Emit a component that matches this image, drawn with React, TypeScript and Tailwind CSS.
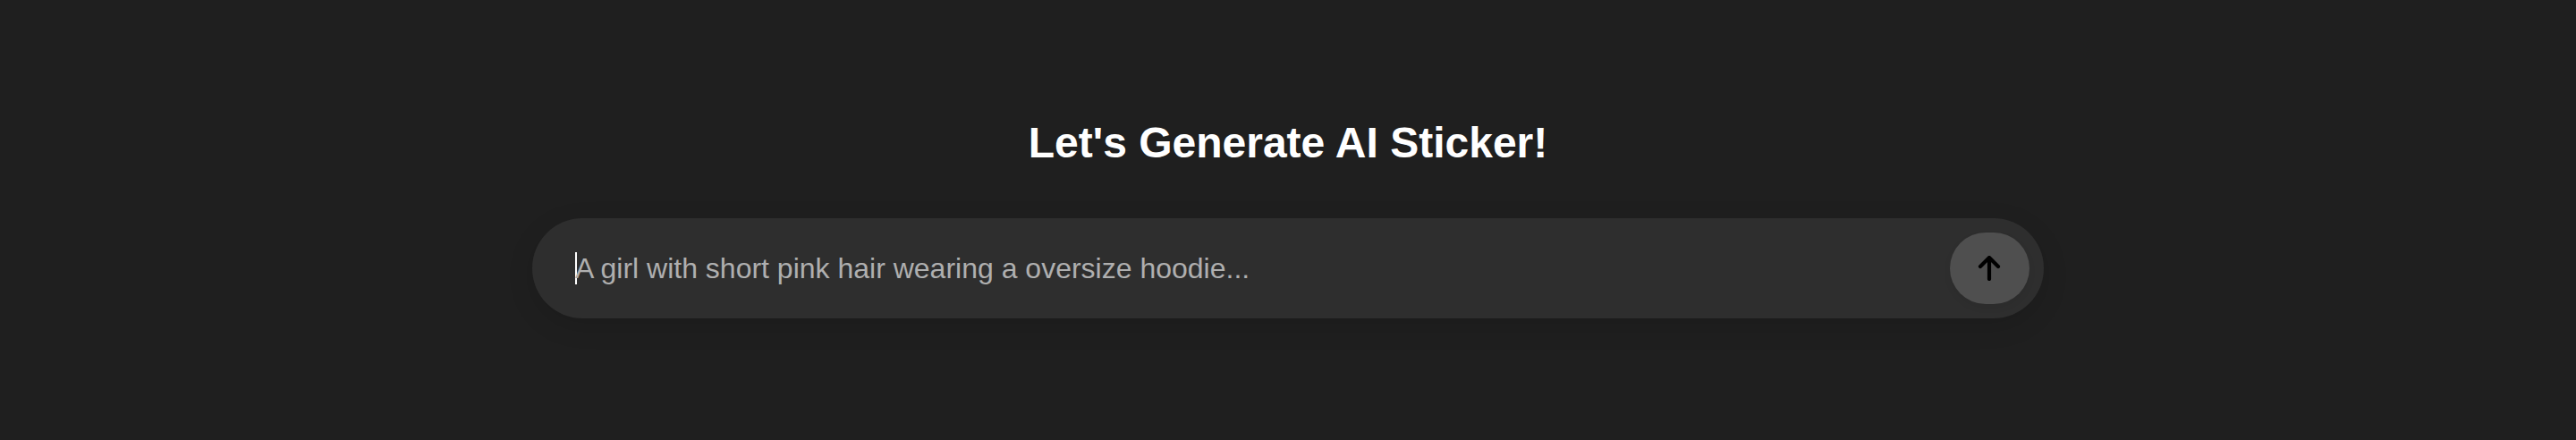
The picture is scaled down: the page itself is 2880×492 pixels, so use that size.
export default function App() {
  return (
    <main className="flex h-[492px] w-full flex-col items-center bg-[#1f1f1f] pt-[130px] font-['Liberation_Sans',Arial,sans-serif] [text-rendering:optimizeLegibility]">
      <h1 className="text-[48px] leading-[60px] font-bold text-white">Let's Generate AI Sticker!</h1>
      <div className="mt-[54px] flex h-[112px] w-[1690px] items-center justify-between rounded-full bg-[#2e2e2e] pr-[16px] pl-[48px] shadow-[0_8px_30px_rgba(0,0,0,0.12)]">
        <div className="flex items-center">
          <span className="h-[36px] w-[2px] bg-white" />
          <span className="-ml-[2px] text-[32px] leading-[48px] text-[#afafaf]">A girl with short pink hair wearing a oversize hoodie...</span>
        </div>
        <button aria-label="Generate" className="flex h-[80px] w-[89px] items-center justify-center rounded-full bg-[#4f4f4f] pr-px shadow-[0_4px_8px_rgba(0,0,0,0.06)]">
          <svg viewBox="0 0 28 28" className="size-[28px]" fill="none" stroke="#000" strokeWidth="4.2" strokeLinecap="round" strokeLinejoin="round">
            <path d="M14 26V2M4 12L14 2l10 10" />
          </svg>
        </button>
      </div>
    </main>
  );
}
